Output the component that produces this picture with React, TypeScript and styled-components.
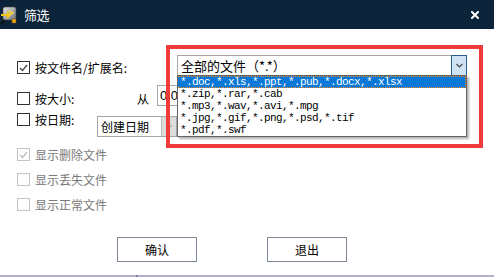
import React, { useState } from 'react';
import styled, { createGlobalStyle, css } from 'styled-components';

// --- Global ---

const GlobalStyle = createGlobalStyle`
  html, body {
    margin: 0;
    padding: 0;
    background: #ffffff;
  }
  body {
    font-family: "Noto Sans CJK SC", "Liberation Sans", sans-serif;
    font-size: 12px;
    color: #000;
  }
`;

// --- Window frame ---

const Window = styled.div`
  position: relative;
  width: 494px;
  height: 277px;
  overflow: hidden;
  background: #fff;
  display: flex;
  flex-direction: column;
`;

const TitleBar = styled.div`
  height: 29px;
  flex: 0 0 29px;
  background: #0c2439;
  display: flex;
  align-items: center;
  padding: 0 13px 0 0;
  color: #fff;
`;

const TitleText = styled.span`
  margin-left: 6px;
  font-size: 13px;
  line-height: 13px;
  letter-spacing: -0.5px;
`;

const CloseButton = styled.button`
  margin-left: auto;
  width: 12px;
  height: 12px;
  padding: 0;
  border: none;
  background: transparent;
  display: flex;
  align-items: center;
  justify-content: center;
  cursor: pointer;
`;

const Body = styled.div`
  flex: 1;
  display: flex;
  flex-direction: column;
  padding-top: 26px;
`;

// --- Rows ---

const Row = styled.div<{ $h: number; $mt?: number }>`
  display: flex;
  align-items: flex-start;
  height: ${p => p.$h}px;
  margin-top: ${p => p.$mt ?? 0}px;
  padding-left: 17px;
`;

const CheckItem = styled.label<{ $dy?: number; $w?: number; $muted?: boolean }>`
  display: flex;
  align-items: center;
  gap: 5px;
  height: 13px;
  margin-top: ${p => p.$dy ?? 0}px;
  width: ${p => (p.$w ? `${p.$w}px` : 'auto')};
  flex: 0 0 auto;
  line-height: 13px;
  color: ${p => (p.$muted ? '#7a7a7a' : '#000')};
  white-space: nowrap;
`;

const Box = styled.span<{ $muted?: boolean }>`
  width: 13px;
  height: 13px;
  box-sizing: border-box;
  border: 1px solid ${p => (p.$muted ? '#c4c4c4' : '#333')};
  background: #fff;
  display: flex;
  align-items: center;
  justify-content: center;
  flex: 0 0 13px;
`;

const SideLabel = styled.span<{ $dy?: number; $w: number }>`
  width: ${p => p.$w}px;
  flex: 0 0 ${p => p.$w}px;
  margin-top: ${p => p.$dy ?? 0}px;
  line-height: 13px;
`;

// only the part left of the open popup shows
const TextInput = styled.div`
  width: 21px;
  height: 21px;
  box-sizing: border-box;
  border: 1px solid #a6a6a6;
  border-right: none;
  padding: 0 0 0 2px;
  font-family: "Liberation Sans", sans-serif;
  font-size: 13px;
  line-height: 19px;
  white-space: nowrap;
  overflow: hidden;
`;

const Combo = styled.div<{ $w: number; $dy?: number }>`
  width: ${p => p.$w}px;
  height: 21px;
  margin-top: ${p => p.$dy ?? 0}px;
  box-sizing: border-box;
  border: 1px solid #a6a6a6;
  display: flex;
  align-items: stretch;
  background: #fff;
`;

const ComboText = styled.span<{ $size?: number }>`
  flex: 1;
  padding-left: 3px;
  font-size: ${p => p.$size ?? 12}px;
  line-height: 19px;
  white-space: nowrap;
  overflow: hidden;
`;

const ComboButton = styled.span<{ $active?: boolean }>`
  width: 15px;
  flex: 0 0 15px;
  box-sizing: border-box;
  display: flex;
  align-items: center;
  justify-content: center;
  ${p =>
    p.$active
      ? css`
          margin: -1px -1px -1px 0;
          width: 16px;
          flex-basis: 16px;
          border: 1px solid #2b5d8c;
          background: #cfe3f5;
        `
      : css`
          border-left: 1px solid #bcbcbc;
          background: #dcdcdc;
        `}
`;

// --- Dropdown list (open popup over the form) ---

const DropList = styled.ul`
  position: absolute;
  left: 177px;
  top: 75px;
  width: 290px;
  margin: 0;
  padding: 0;
  list-style: none;
  box-sizing: border-box;
  border: 1px solid #646464;
  background: #fff;
  box-shadow: 2px 2px 2px rgba(0, 0, 0, 0.3);
  z-index: 2;
`;

const DropItem = styled.li<{ $selected?: boolean }>`
  height: 12px;
  box-sizing: border-box;
  padding-left: 2px;
  font-family: "Liberation Mono", "DejaVu Sans Mono", monospace;
  font-size: 11px;
  letter-spacing: -0.6px;
  line-height: 11px;
  white-space: nowrap;
  color: ${p => (p.$selected ? '#fff' : '#000')};
  background: ${p => (p.$selected ? '#0a78d7' : 'transparent')};
  border: 1px ${p => (p.$selected ? 'dotted #e8892c' : 'solid transparent')};
  border-left-width: 0;
  border-right-width: ${p => (p.$selected ? '1px' : '0')};
`;

// --- Annotation overlay ---

const Highlight = styled.div`
  position: absolute;
  left: 166px;
  top: 45px;
  width: 317px;
  height: 103px;
  box-sizing: border-box;
  border: 4px solid #f03a3b;
  pointer-events: none;
  z-index: 3;
`;

// --- Disabled options ---

const OptionGroup = styled.div`
  display: flex;
  flex-direction: column;
  gap: 12px;
  margin-top: 11px;
  padding-left: 17px;
`;

// --- Buttons ---

const ButtonRow = styled.div`
  display: flex;
  gap: 70px;
  margin-top: 26px;
  padding-left: 117px;
`;

const Button = styled.button`
  width: 80px;
  height: 25px;
  box-sizing: border-box;
  border: 1px solid #7b8794;
  background: #fff;
  font-family: inherit;
  font-size: 12px;
  color: #000;
  padding: 0;
  cursor: pointer;
`;

const StatusLine = styled.div`
  position: relative;
  margin-top: 13px;
  height: 2px;
  background: #aeb1c9;

  &::before {
    content: '';
    position: absolute;
    left: 136px;
    top: 0;
    width: 2px;
    height: 2px;
    background: #7d82a3;
  }
`;

// --- Icons ---

const AppIcon = () => (
  <svg width="18" height="20" viewBox="0 0 18 20" style={{ flex: '0 0 18px' }}>
    <defs>
      <linearGradient id="mg" x1="0" y1="0" x2="1" y2="1">
        <stop offset="0" stopColor="#e8e8e8" />
        <stop offset="1" stopColor="#6a6f76" />
      </linearGradient>
    </defs>
    <rect x="3" y="2" width="13" height="13" rx="2" fill="url(#mg)" stroke="#444" strokeWidth="0.6" />
    <path d="M1 9 L7 9 L7 6 L11 10 L7 14 L7 11 L1 11 Z" fill="#f5c518" />
    <path d="M9 6 L13 8 L9 10" fill="none" stroke="#f5d53a" strokeWidth="1.4" />
    <rect x="12" y="14" width="4" height="4" fill="#f2a91c" stroke="#6b4a0a" strokeWidth="0.5" />
    <line x1="0.5" y1="19.5" x2="5" y2="15" stroke="#111" strokeWidth="1.5" />
  </svg>
);

const CloseIcon = () => (
  <svg width="8" height="8" viewBox="0 0 8 8">
    <path d="M1 1 L7 7 M7 1 L1 7" stroke="#fff" strokeWidth="2" strokeLinecap="square" />
  </svg>
);

const Tick = ({ color }: { color: string }) => (
  <svg width="9" height="8" viewBox="0 0 9 8">
    <path d="M1 4 L3.5 6.5 L8 1" fill="none" stroke={color} strokeWidth="1.3" />
  </svg>
);

const Chevron = ({ color, w = 7 }: { color: string; w?: number }) => (
  <svg width={w} height="5" viewBox="0 0 7 5">
    <path d="M0.5 1 L3.5 4 L6.5 1" fill="none" stroke={color} strokeWidth="1.2" />
  </svg>
);

// --- Data ---

const extOptions = [
  '*.doc,*.xls,*.ppt,*.pub,*.docx,*.xlsx',
  '*.zip,*.rar,*.cab',
  '*.mp3,*.wav,*.avi,*.mpg',
  '*.jpg,*.gif,*.png,*.psd,*.tif',
  '*.pdf,*.swf',
];

const showOptions = [
  { label: '显示删除文件', checked: true },
  { label: '显示丢失文件', checked: false },
  { label: '显示正常文件', checked: false },
];

// --- App ---

const App: React.FC = () => {
  const [selected] = useState(0);

  return (
    <>
      <GlobalStyle />
      <Window>
        <TitleBar>
          <AppIcon />
          <TitleText>筛选</TitleText>
          <CloseButton aria-label="关闭">
            <CloseIcon />
          </CloseButton>
        </TitleBar>

        <Body>
          <Row $h={20}>
            <CheckItem $dy={6} $w={160}>
              <Box>
                <Tick color="#444" />
              </Box>
              按文件名/扩展名:
            </CheckItem>
            <Combo $w={290}>
              <ComboText $size={13}>全部的文件（*.*）</ComboText>
              <ComboButton $active>
                <Chevron color="#4a4a4a" />
              </ComboButton>
            </Combo>
          </Row>

          <Row $h={21} $mt={10}>
            <CheckItem $dy={7} $w={120}>
              <Box />
              按大小:
            </CheckItem>
            <SideLabel $dy={7} $w={20}>从</SideLabel>
            <TextInput>0.0</TextInput>
          </Row>

          <Row $h={24} $mt={7}>
            <CheckItem $w={80}>
              <Box />
              按日期:
            </CheckItem>
            <Combo $w={80} $dy={3}>
              <ComboText>创建日期</ComboText>
              <ComboButton>
                <Chevron color="#777" w={5} />
              </ComboButton>
            </Combo>
          </Row>

          <OptionGroup>
            {showOptions.map(o => (
              <CheckItem key={o.label} $muted>
                <Box $muted>{o.checked && <Tick color="#bdbdbd" />}</Box>
                {o.label}
              </CheckItem>
            ))}
          </OptionGroup>

          <ButtonRow>
            <Button>确认</Button>
            <Button>退出</Button>
          </ButtonRow>

          <StatusLine />
        </Body>

        <DropList>
          {extOptions.map((ext, i) => (
            <DropItem key={ext} $selected={i === selected}>
              {ext}
            </DropItem>
          ))}
        </DropList>

        <Highlight />
      </Window>
    </>
  );
};

export default App;
